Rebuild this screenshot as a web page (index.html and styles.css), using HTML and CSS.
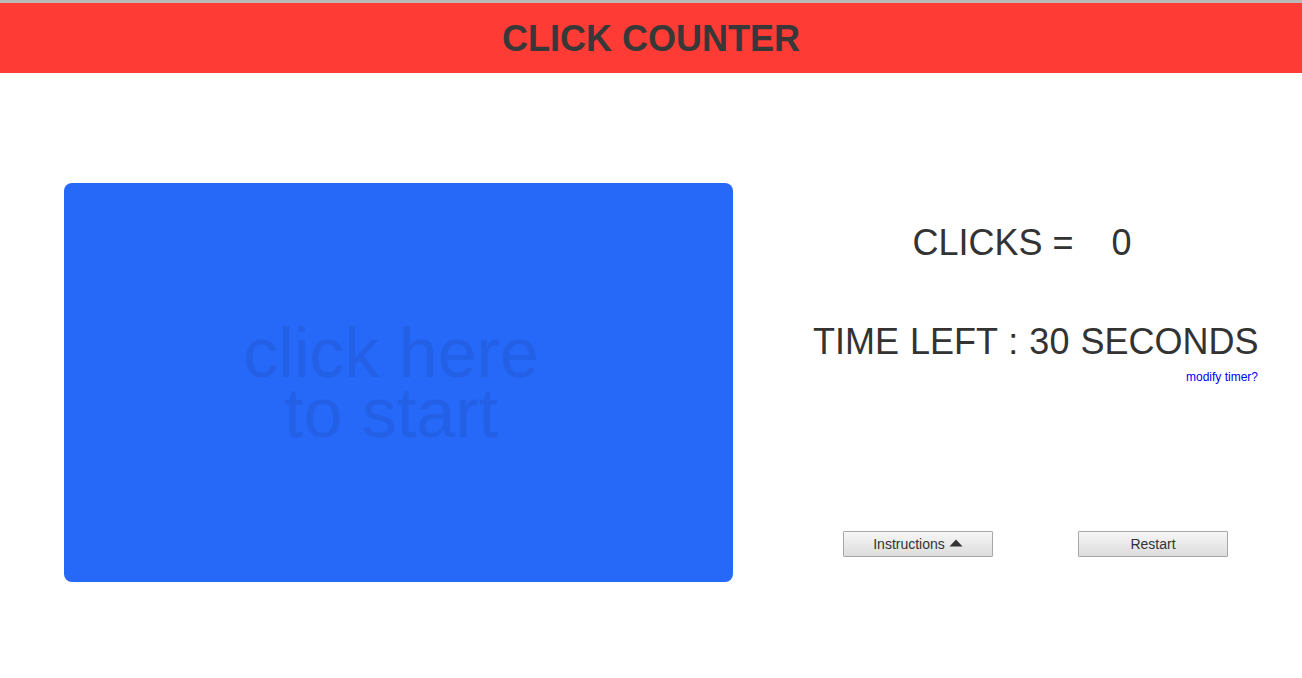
FILE: index.html
```html
<!DOCTYPE html>
<html>
<head>
<meta charset="utf-8">
<title>Click Counter</title>
<link rel="stylesheet" href="styles.css">
</head>
<body>
<header class="topbar">
  <h1 class="title">CLICK COUNTER</h1>
</header>
<main class="game">
  <div class="clickpad">
    <div class="clickpad-text">click here<br>to start</div>
  </div>
  <section class="panel">
    <div class="clicks"><span class="clicks-label">CLICKS =</span><span class="clicks-num">0</span></div>
    <div class="timeleft">TIME LEFT : 30 SECONDS</div>
    <div class="modify"><a class="modify-link" href="#">modify timer?</a></div>
    <div class="buttons">
      <button class="btn">Instructions <svg class="caret" width="14" height="8" viewBox="0 0 14 8"><path d="M7 0.5 L13.5 7.5 L0.5 7.5 Z" fill="#333"/></svg></button>
      <button class="btn">Restart</button>
    </div>
  </section>
</main>
</body>
</html>
```
FILE: styles.css
```css
html, body {
  margin: 0;
  padding: 0;
  background: #ffffff;
  font-family: "Liberation Sans", Arial, sans-serif;
  color: #333333;
}

.topbar {
  border-top: 3px solid #b9b9b9;
  background: #ff3b35;
  height: 69px;
  padding-top: 1px;
}

.title {
  margin: 0;
  text-align: center;
  font-size: 36px;
  line-height: 70px;
  font-weight: bold;
  color: #383838;
}

.game {
  display: flex;
  align-items: flex-start;
  padding: 110px 0 0 64px;
}

.clickpad {
  width: 669px;
  height: 399px;
  background: #2668f7;
  border-radius: 8px;
  display: flex;
  align-items: center;
  justify-content: center;
  flex-shrink: 0;
}

.clickpad-text {
  font-size: 70px;
  line-height: 60px;
  text-align: center;
  color: #2360e6;
  padding-right: 15px;
}

.panel {
  margin-left: 80px;
  width: 445px;
  padding-top: 40px;
  display: flex;
  flex-direction: column;
}

.clicks {
  display: flex;
  justify-content: center;
  font-size: 36px;
  line-height: 40px;
  color: #333333;
  padding-right: 2px;
}

.clicks-num {
  margin-left: 38px;
  min-width: 45px;
}

.timeleft {
  margin-top: 59px;
  font-size: 36px;
  line-height: 40px;
  text-align: center;
  white-space: nowrap;
  word-spacing: 1px;
  color: #333333;
}

.modify {
  margin-top: 8px;
  text-align: right;
  font-size: 12px;
  line-height: 14px;
}

.modify-link {
  color: #0000ff;
  text-decoration: none;
}

.buttons {
  margin-top: 147px;
  display: flex;
  justify-content: space-between;
  padding: 0 30px;
}

.btn {
  width: 150px;
  height: 26px;
  border: 1px solid #a8a8a8;
  border-radius: 1px;
  background: linear-gradient(#f7f7f7, #dcdcdc);
  font-family: "Liberation Sans", Arial, sans-serif;
  font-size: 14px;
  color: #333333;
  padding: 0;
  display: flex;
  align-items: center;
  justify-content: center;
  gap: 4px;
}

.caret {
  display: block;
  margin-top: -2px;
}
```
